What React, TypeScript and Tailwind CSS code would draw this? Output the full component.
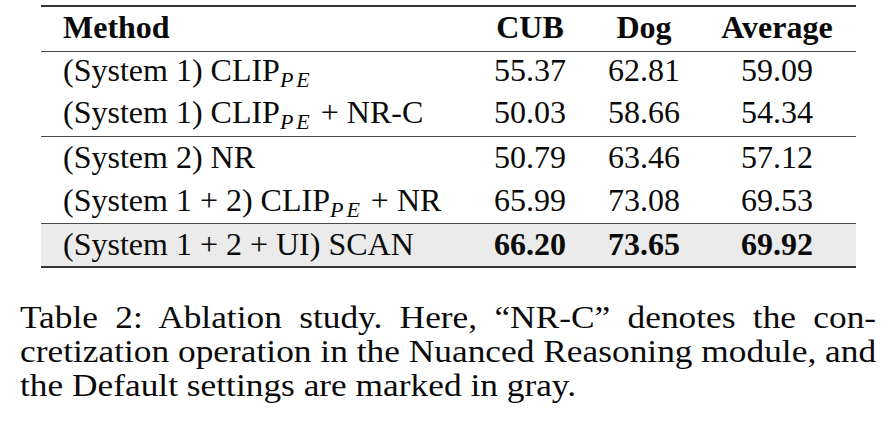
import type { ReactNode } from "react";

type Row = {
  method: ReactNode;
  cub: string;
  dog: string;
  avg: string;
};

const ClipPE = () => (
  <>
    CLIP
    <sub className="text-[22px] italic tracking-[3px]">PE</sub>
  </>
);

const firstGroup: Row[] = [
  {
    method: (
      <>
        (System 1) <ClipPE />
      </>
    ),
    cub: "55.37",
    dog: "62.81",
    avg: "59.09",
  },
  {
    method: (
      <>
        (System 1) <ClipPE /> + NR-C
      </>
    ),
    cub: "50.03",
    dog: "58.66",
    avg: "54.34",
  },
];

const secondGroup: Row[] = [
  { method: "(System 2) NR", cub: "50.79", dog: "63.46", avg: "57.12" },
  {
    method: (
      <>
        (System 1 + 2) <ClipPE /> + NR
      </>
    ),
    cub: "65.99",
    dog: "73.08",
    avg: "69.53",
  },
];

const defaultRow: Row = {
  method: "(System 1 + 2 + UI) SCAN",
  cub: "66.20",
  dog: "73.65",
  avg: "69.92",
};

const TableRow = ({
  row,
  height,
  shaded,
}: {
  row: Row;
  height: string;
  shaded?: boolean;
}) => (
  <div
    className={`grid grid-cols-[429px_120px_108px_158px] ${height} ${
      shaded ? "bg-[#ebebeb]" : ""
    }`}
  >
    <div className="pl-[22px] whitespace-nowrap">{row.method}</div>
    <div className={`text-center ${shaded ? "font-bold" : ""}`}>{row.cub}</div>
    <div className={`text-center ${shaded ? "font-bold" : ""}`}>{row.dog}</div>
    <div className={`text-center ${shaded ? "font-bold" : ""}`}>{row.avg}</div>
  </div>
);

export default function App() {
  return (
    <div className="w-[890px] h-[431px] bg-white text-[#0a0a0a] font-['Liberation_Serif','Times_New_Roman',serif] overflow-hidden">
      {/* table */}
      <div className="ml-[41px] mt-[5px] w-[815px] text-[32px]">
        <div className="h-[2px] bg-[#333333]" />
        <div className="grid grid-cols-[429px_120px_108px_158px] h-[44px] leading-[40px] font-bold">
          <div className="pl-[22px]">Method</div>
          <div className="text-center">CUB</div>
          <div className="text-center">Dog</div>
          <div className="text-center">Average</div>
        </div>
        <div className="h-px bg-[#4a4a4a]" />
        <div className="leading-[37px]">
          {firstGroup.map((row, i) => (
            <TableRow key={i} row={row} height="h-[42px]" />
          ))}
        </div>
        <div className="h-px bg-[#4a4a4a]" />
        <div className="leading-[40px]">
          {secondGroup.map((row, i) => (
            <TableRow key={i} row={row} height="h-[43px]" />
          ))}
        </div>
        <div className="h-px bg-[#4a4a4a]" />
        <div className="leading-[40px]">
          <TableRow row={defaultRow} height="h-[42px]" shaded />
        </div>
        <div className="h-[2px] bg-[#333333]" />
      </div>

      {/* caption, set slightly wide like the scanned page */}
      <div className="ml-[20px] mt-[33px] w-[751px] origin-top-left scale-x-[1.14] text-[31px] leading-[34px]">
        <div className="text-justify [text-align-last:justify] whitespace-nowrap">
          Table 2: Ablation study. Here, “NR-C” denotes the con-
        </div>
        <div className="text-justify [text-align-last:justify]">
          cretization operation in the Nuanced Reasoning module, and
        </div>
        <div>the Default settings are marked in gray.</div>
      </div>
    </div>
  );
}
